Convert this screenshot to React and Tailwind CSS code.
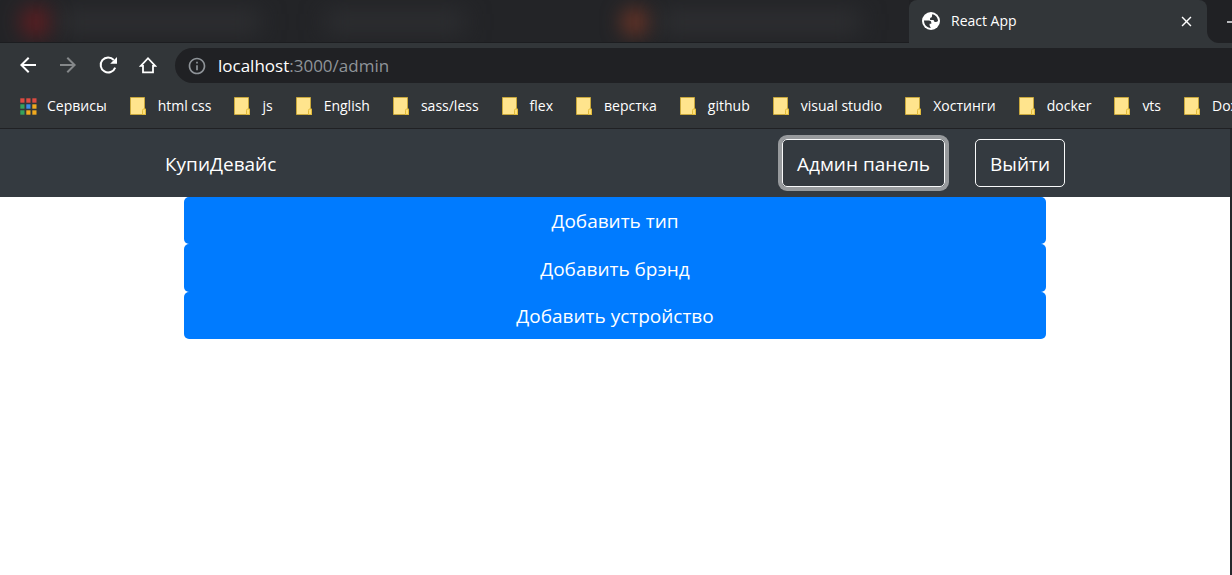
import React from "react";
import { MdArrowBack, MdArrowForward, MdOutlineInfo, MdClose } from "react-icons/md";

const folders = [
  "html css",
  "js",
  "English",
  "sass/less",
  "flex",
  "верстка",
  "github",
  "visual studio",
  "Хостинги",
  "docker",
  "vts",
  "Dox",
];

const appDots = [
  "#dd4b41", "#dd4b41", "#dd4b41",
  "#35a15c", "#3b8be8", "#f0a91f",
  "#35a15c", "#f0a91f", "#f0a91f",
];

function AppsIcon() {
  return (
    <svg width="17" height="17" viewBox="0 0 17 17" className="shrink-0" aria-hidden="true">
      {appDots.map((color, i) => (
        <rect key={i} x={(i % 3) * 6 + 0.3} y={Math.floor(i / 3) * 6 + 0.3} width="4.2" height="4.4" fill={color} />
      ))}
    </svg>
  );
}

function FolderIcon() {
  return (
    <svg width="16" height="18" viewBox="0 0 16 18" className="shrink-0" aria-hidden="true">
      <path d="M.5.5h14v11.500h1v5.500H.5z" fill="#ffe48d" stroke="#c9a83c" />
      <path d="M12.500 17v-3.600c0-.9.5-1.400 1.200-1.400h1.800v5.500h-3z" fill="#ffe07a" stroke="#e2bb3a" />
    </svg>
  );
}

function HomeIcon() {
  return (
    <svg width="18" height="18" viewBox="0 0 18 18" fill="none" stroke="currentColor" strokeWidth="1.8" aria-hidden="true">
      <path d="M4 9.800H1.800L9 2.200l7.200 7.600H14M4 9v7.400h10V9" />
    </svg>
  );
}

function ReloadIcon() {
  return (
    <svg width="24" height="24" viewBox="0 0 24 24" fill="none" aria-hidden="true">
      <path d="M19.200 14.600A7.500 7.500 0 1 1 17.800 7" stroke="currentColor" strokeWidth="2" />
      <path d="M21 4v6.800h-6.800z" fill="currentColor" />
    </svg>
  );
}

function GlobeIcon() {
  return (
    <svg width="18" height="18" viewBox="0 0 18 18" className="shrink-0" aria-hidden="true">
      <circle cx="9" cy="9" r="9" fill="#fff" />
      <path d="M2 8.600h4.800c1.600 0 2.500.8 2.500 2.200v.9H7.600v1.800l1.200 2.400C5 16 2 12.900 2 8.600z" fill="#323639" />
      <path d="M10.200 2.200c3.300.6 5.800 3.400 5.800 6.800-.8.800-1.700 1.100-2.600 1-1.200-.2-1.700-1-1.700-2.100H8.200c-.6-1.400 0-2.400 1.600-2.700z" fill="#323639" />
    </svg>
  );
}

function TabStrip() {
  return (
    <div className="flex h-[43px] bg-[#202124]">
      <div className="relative min-w-0 flex-1 overflow-hidden border-b border-[#1c1d20] bg-[#232427]">
        <div className="absolute top-2 left-[22px] h-7 w-7 rounded-full bg-[#6e1c20] blur-[11px]" />
        <div className="absolute top-3 left-[60px] h-5 w-[200px] bg-[#303134] blur-[12px]" />
        <div className="absolute top-3 left-[325px] h-5 w-[140px] bg-[#2f3033] blur-[12px]" />
        <div className="absolute top-2 left-[621px] h-7 w-7 rounded-full bg-[#6c3527] blur-[10px]" />
        <div className="absolute top-3 left-[660px] h-5 w-[200px] bg-[#303134] blur-[12px]" />
      </div>
      <div className="flex w-[298px] items-center rounded-t-lg bg-[#323639] pr-3 pb-px pl-[13px] text-white">
        <GlobeIcon />
        <span className="ml-[11px] flex-1 text-sm">React App</span>
        <button type="button" aria-label="Закрыть вкладку">
          <MdClose size={17} />
        </button>
      </div>
      <div className="w-[25px] bg-[#323639]">
        <button type="button" aria-label="Свернуть" className="flex h-full w-full items-center justify-end overflow-hidden rounded-bl-xl bg-[#202124]">
          <span className="h-[2px] w-[5px] bg-[#b9babc]" />
        </button>
      </div>
    </div>
  );
}

function Toolbar() {
  return (
    <div className="flex h-[45px] items-center text-white">
      <div className="flex w-[175px] items-center gap-4 pb-px pl-4">
        <button type="button" aria-label="Назад"><MdArrowBack size={24} /></button>
        <button type="button" aria-label="Вперёд" className="text-[#85888a]"><MdArrowForward size={24} /></button>
        <button type="button" aria-label="Обновить"><ReloadIcon /></button>
        <button type="button" aria-label="Домой" className="flex w-6 justify-center"><HomeIcon /></button>
      </div>
      <div className="flex h-[35px] flex-1 items-center rounded-l-full bg-[#202124] pl-3 text-[#8f9499]">
        <MdOutlineInfo size={20} className="shrink-0" />
        <div className="ml-[11px] text-[17px]">
          <span className="text-white">localhost</span>:3000/admin
        </div>
      </div>
    </div>
  );
}

function Bookmarks() {
  return (
    <nav className="flex h-[41px] gap-[23px] overflow-hidden border-b border-[#202124] pb-1 pl-5 text-sm text-white">
      <a href="#apps" className="flex shrink-0 items-center gap-[10px]">
        <AppsIcon />
        Сервисы
      </a>
      {folders.map((name) => (
        <a key={name} href="#folder" className="flex shrink-0 items-center gap-3">
          <FolderIcon />
          {name}
        </a>
      ))}
    </nav>
  );
}

export default function App() {
  return (
    <div className="flex min-h-screen flex-col bg-white font-['Open_Sans','Noto_Sans',sans-serif]">
      <header className="bg-[#323639]">
        <TabStrip />
        <Toolbar />
        <Bookmarks />
      </header>
      <div className="flex flex-1 flex-col border-r-2 border-[#25272b]">
        <nav className="bg-[#343a40] text-[19px] text-white">
          <div className="mx-auto flex h-[68px] max-w-[900px] items-center">
            <a href="#shop" className="mr-auto pt-[2px]">КупиДевайс</a>
            <button type="button" className="h-12 rounded-[5px] border border-[#f8f9fa] px-[14px] pt-[2px] ring-4 ring-[#979a9d]">Админ панель</button>
            <button type="button" className="ml-[30px] h-12 rounded-[5px] border border-[#f8f9fa] px-[14px] pt-[2px]">Выйти</button>
          </div>
        </nav>
        <main className="mx-auto grid h-[142px] w-full max-w-[862px] grid-rows-3 text-[19px] text-white">
          <button type="button" className="rounded-[5px] bg-[#007bff] pt-[2px]">Добавить тип</button>
          <button type="button" className="rounded-[5px] bg-[#007bff] pt-[2px]">Добавить брэнд</button>
          <button type="button" className="rounded-[5px] bg-[#007bff] pt-[2px]">Добавить устройство</button>
        </main>
      </div>
    </div>
  );
}
